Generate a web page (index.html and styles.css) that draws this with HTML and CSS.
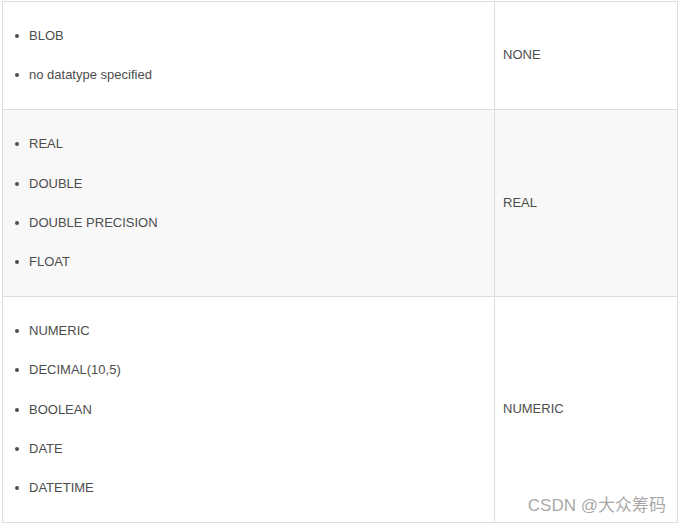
FILE: index.html
```html
<!DOCTYPE html>
<html>
<head>
<meta charset="utf-8">
<link rel="stylesheet" href="styles.css">
</head>
<body>
<div class="wrap">
<table class="tbl">
<tr>
<td class="c1"><ul><li>BLOB</li><li>no datatype specified</li></ul></td>
<td class="c2">NONE</td>
</tr>
<tr class="alt">
<td class="c1"><ul><li>REAL</li><li>DOUBLE</li><li>DOUBLE PRECISION</li><li>FLOAT</li></ul></td>
<td class="c2">REAL</td>
</tr>
<tr>
<td class="c1"><ul><li>NUMERIC</li><li>DECIMAL(10,5)</li><li>BOOLEAN</li><li>DATE</li><li>DATETIME</li></ul></td>
<td class="c2">NUMERIC</td>
</tr>
</table>
<div class="mark">CSDN @大众筹码</div>
</div>
</body>
</html>
```
FILE: styles.css
```css
html, body { margin: 0; padding: 0; background: #fff; }
.wrap { position: relative; padding: 1px 0 0 2px; width: 676px; }
.tbl {
  border-collapse: collapse;
  width: 676px;
  font-family: "Liberation Sans", Arial, sans-serif;
  font-size: 13px;
  color: #4d4d4d;
}
.tbl td { border: 1px solid #dddddd; vertical-align: middle; }
.alt td { background: #f8f8f8; }
.c1 { width: 491px; padding: 23px 0 23px 0; }
.c2 { padding: 0 8px 2px 8px; }
.tbl ul { list-style: none; margin: 0; padding: 0 0 0 26px; }
.tbl li { line-height: 22px; position: relative; margin-bottom: 17.3px; }
.tbl li:last-child { margin-bottom: 0; }
.tbl li::before {
  content: "";
  position: absolute;
  left: -14px;
  top: 9px;
  width: 4px;
  height: 4px;
  border-radius: 50%;
  background: #4d4d4d;
}
.mark {
  position: absolute;
  right: 12px;
  bottom: 7px;
  font-family: "Liberation Sans", "Noto Sans CJK SC", sans-serif;
  font-size: 17px;
  color: rgba(128,128,128,0.7);
}
```
